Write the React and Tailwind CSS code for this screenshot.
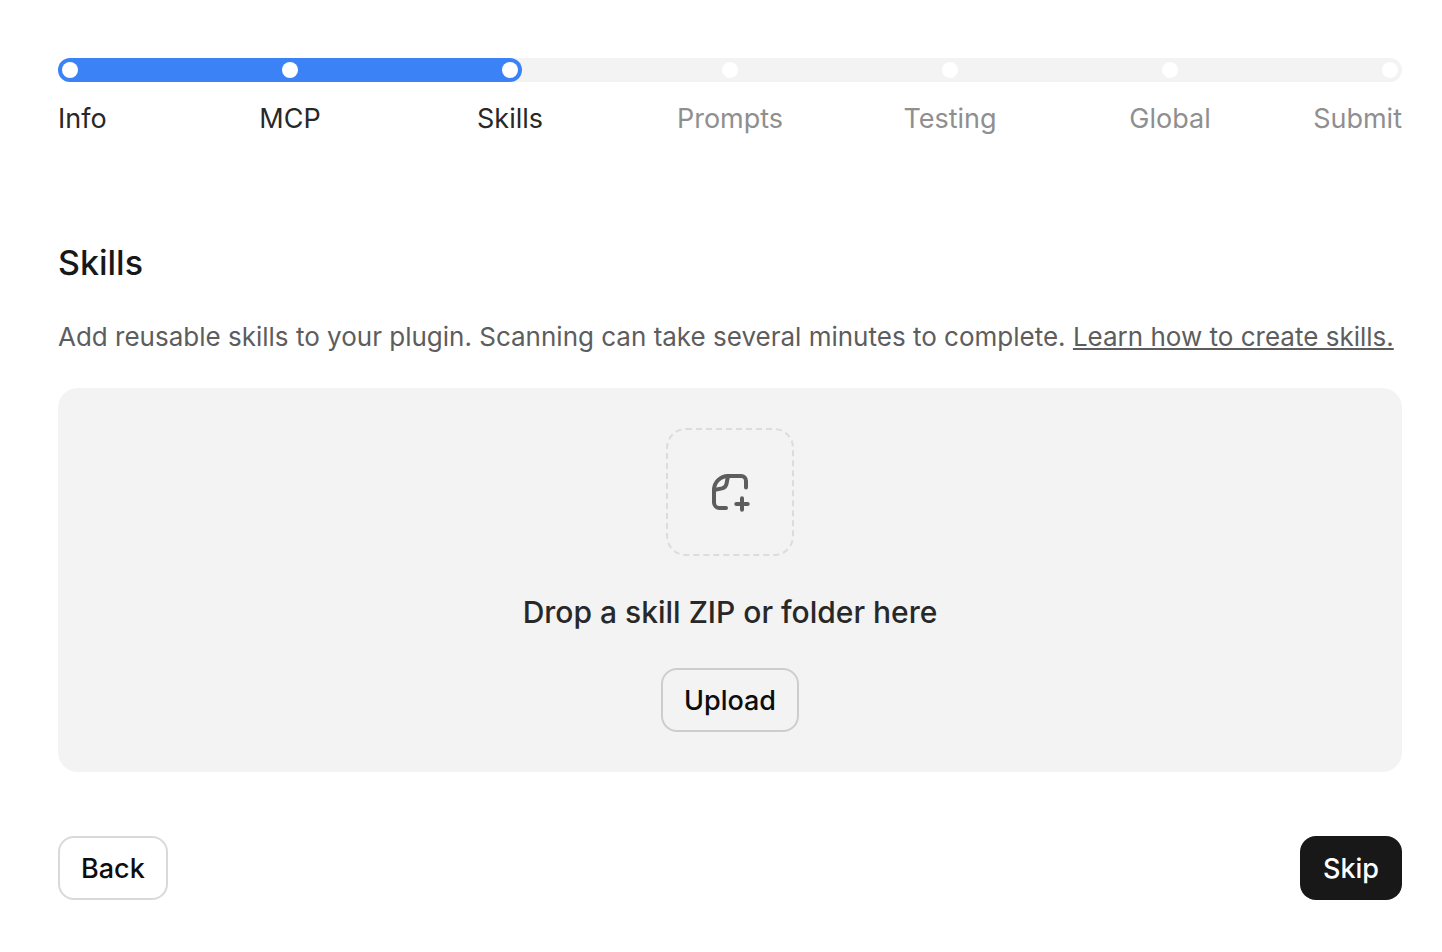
const steps = ["Info", "MCP", "Skills", "Prompts", "Testing", "Global", "Submit"];
const current = 2;

function labelAlign(index) {
  if (index === 0) return "items-start";
  if (index === steps.length - 1) return "items-end";
  return "items-center";
}

function Stepper() {
  const progress = current / (steps.length - 1);
  return (
    <nav aria-label="Progress">
      <div className="relative h-6 rounded-full bg-[#f3f3f3]">
        <div
          className="h-6 rounded-full bg-[#3b82f6]"
          style={{ width: `calc(24px + (100% - 24px) * ${progress})` }}
        />
        <div className="absolute inset-0 flex items-center justify-between px-1">
          {steps.map((step) => (
            <span key={step} className="size-4 rounded-full bg-white" />
          ))}
        </div>
      </div>
      <ol className="mt-[17px] flex justify-between">
        {steps.map((step, index) => (
          <li
            key={step}
            aria-current={index === current ? "step" : undefined}
            className={`flex w-6 flex-col whitespace-nowrap ${labelAlign(index)} ${
              index <= current ? "text-[#282828]" : "text-[#8f8f8f]"
            }`}
          >
            <span>{step}</span>
          </li>
        ))}
      </ol>
    </nav>
  );
}

function AddFileIcon() {
  return (
    <svg
      viewBox="0 0 40 40"
      className="size-10"
      fill="none"
      stroke="#5d5d5d"
      strokeWidth="4"
      strokeLinecap="round"
      strokeLinejoin="round"
      aria-hidden="true"
    >
      <path d="M16 36H9.500C6.500 36 4 33.500 4 30.500V18C4 10.300 10.300 4 18 4h13c3 0 5 2 5 5v6.400" />
      <path d="M18 4l-1.500 7.800c-.5 2.500-2 4-4.500 4.600L4 18" />
      <path d="M32 26.300v11.400M26.300 32h11.400" />
    </svg>
  );
}

export default function App() {
  return (
    <main className="bg-white pt-[58px] pr-10 pb-[52px] pl-[58px] font-['Inter',sans-serif] text-[27px] leading-10">
      <Stepper />

      <section className="mt-[100px]">
        <h1 className="text-[34px] leading-12 font-medium text-[#181818]">Skills</h1>
        <p className="mt-[30px] text-[26px] text-[#5d5d5d]">
          Add reusable skills to your plugin. Scanning can take several minutes to complete.{" "}
          <a href="#create-skills" className="underline decoration-2 underline-offset-2">
            Learn how to create skills.
          </a>
        </p>

        <div className="mt-[31px] flex flex-col items-center rounded-[20px] bg-[#f3f3f3] py-10">
          <div className="flex size-32 items-center justify-center rounded-[20px] border-2 border-dashed border-[#dcdcdc]">
            <AddFileIcon />
          </div>
          <p className="mt-8 text-[30px] leading-12 font-medium text-[#282828]">
            Drop a skill ZIP or folder here
          </p>
          <button
            type="button"
            className="mt-8 h-16 rounded-2xl border-2 border-[#cdcdcd] px-[21px] pt-0.5 font-medium text-[#0d0d0d]"
          >
            Upload
          </button>
        </div>
      </section>

      <footer className="mt-16 flex items-center justify-between">
        <button
          type="button"
          className="h-16 rounded-2xl border-2 border-[#d9d9d9] px-[21px] pt-0.5 font-medium text-[#0d0d0d]"
        >
          Back
        </button>
        <button type="button" className="h-16 rounded-2xl bg-[#181818] px-[23px] pt-0.5 font-medium text-white">
          Skip
        </button>
      </footer>
    </main>
  );
}
